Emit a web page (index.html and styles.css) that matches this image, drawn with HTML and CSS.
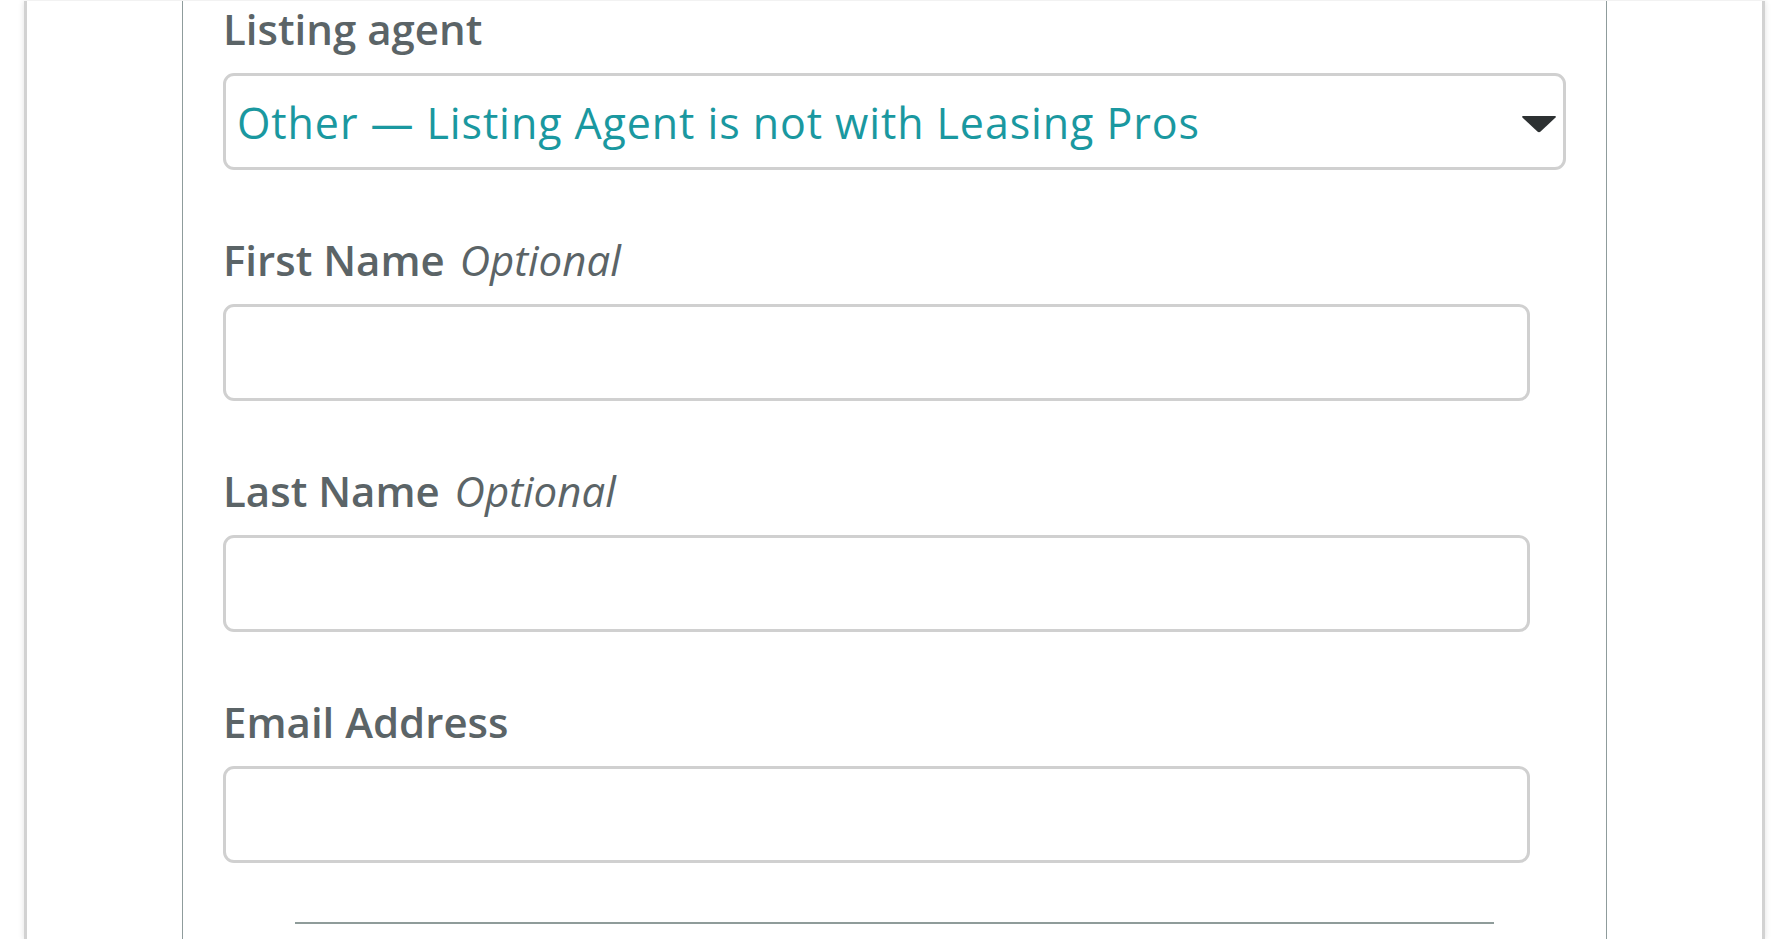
FILE: index.html
```html
<!DOCTYPE html>
<html lang="en">
<head>
<meta charset="utf-8">
<title>Listing agent</title>
<link rel="stylesheet" href="styles.css">
</head>
<body>
<div class="card">
  <div class="panel">
    <div class="fields">
      <div class="field first">
        <label class="label">Listing agent</label>
        <div class="select">
          <span class="select-value">Other — Listing Agent is not with Leasing Pros</span>
          <svg class="caret" width="36" height="17" viewBox="0 0 36 17"><path d="M2.5 0 H33.5 Q36 0 34.3 1.8 L19.6 15.6 Q18 17 16.4 15.6 L1.7 1.8 Q0 0 2.5 0 Z" fill="#2d3132"/></svg>
        </div>
      </div>
      <div class="field">
        <label class="label">First Name <em class="opt">Optional</em></label>
        <div class="input"></div>
      </div>
      <div class="field">
        <label class="label">Last Name <em class="opt">Optional</em></label>
        <div class="input"></div>
      </div>
      <div class="field">
        <label class="label">Email Address</label>
        <div class="input"></div>
      </div>
    </div>
    <hr class="divider">
  </div>
</div>
</body>
</html>
```
FILE: styles.css
```css
html, body {
  margin: 0;
  padding: 0;
  background: #ffffff;
  height: 100%;
  overflow: hidden;
}
body {
  font-family: "Open Sans", "Noto Sans", sans-serif;
}
.card {
  margin-left: 24px;
  width: 1735px;
  height: 939px;
  border-left: 3px solid #d2d2d2;
  border-right: 3px solid #d2d2d2;
  box-shadow: 0 0 6px rgba(0, 0, 0, 0.12);
  background: #fff;
}
.panel {
  margin-left: 155px;
  width: 1423px;
  height: 939px;
  border-left: 1px solid #8f9c9c;
  border-right: 1px solid #8f9c9c;
}
.fields {
  padding: 0 40px;
}
.field {
  margin-top: 62px;
}
.field.first {
  margin-top: 1px;
}
.label {
  display: block;
  font-size: 42px;
  font-weight: 600;
  line-height: 56px;
  color: #5b6467;
  margin-bottom: 16px;
}
.opt {
  font-weight: 400;
  font-style: italic;
  margin-left: 4px;
}
.select {
  box-sizing: border-box;
  width: 1343px;
  height: 97px;
  border: 3px solid #d0d0d0;
  border-radius: 11px;
  display: flex;
  align-items: center;
  justify-content: space-between;
  padding: 0 6px 0 11px;
}
.select-value {
  font-size: 43px;
  color: #1a98a0;
  letter-spacing: 0.9px;
  margin-top: 1px;
}
.caret {
  margin-top: 5px;
}
.input {
  box-sizing: border-box;
  width: 1307px;
  height: 97px;
  border: 3px solid #d0d0d0;
  border-radius: 11px;
}
.divider {
  margin: 59px 112px 0 112px;
  border: 0;
  height: 2px;
  background: #8f9c9a;
}
```
